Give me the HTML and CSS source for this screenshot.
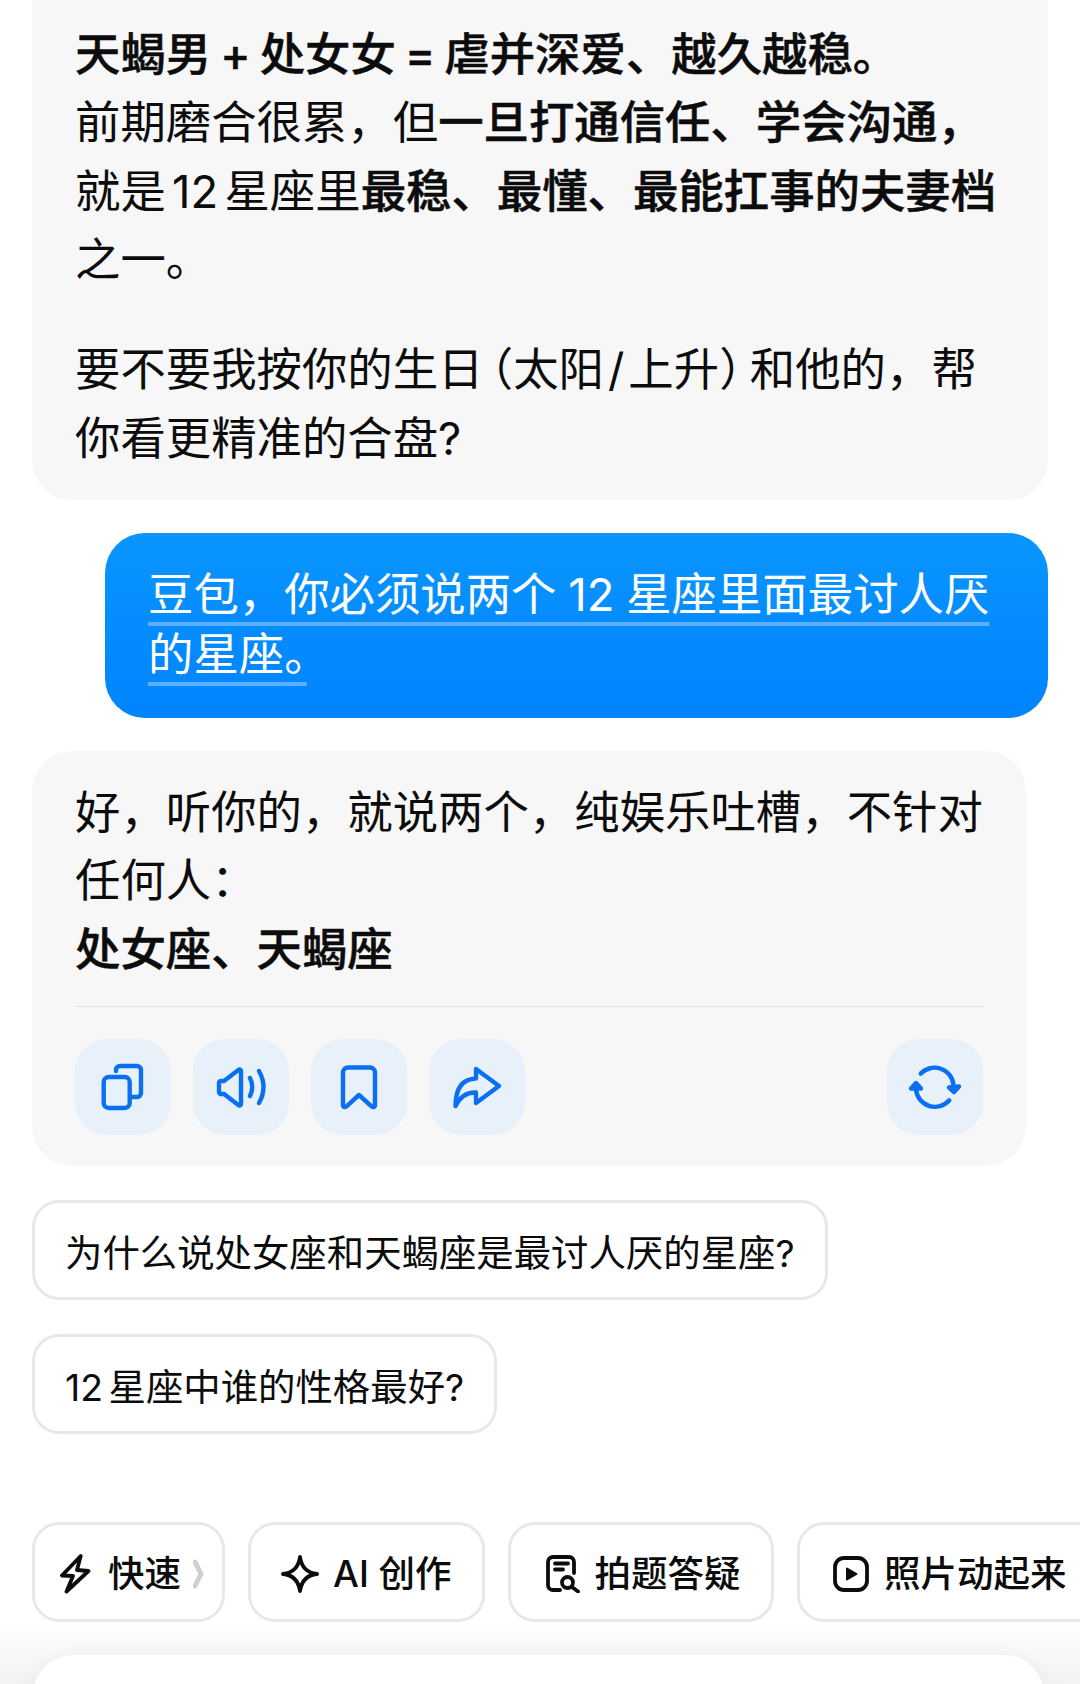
FILE: index.html
```html
<!DOCTYPE html>
<html lang="zh-CN">
<head>
<meta charset="utf-8">
<title>豆包</title>
<link rel="stylesheet" href="styles.css">
</head>
<body>
<main class="chat">
  <section class="bubble bubble-first">
    <p class="para"><strong class="tight-words">天蝎男 + 处女女 = 虐并深爱、越久越稳。</strong><br>前期磨合很累，但<strong>一旦打通信任、学会沟通，</strong><br><span class="tight">就是 12 星座里</span><strong>最稳、最懂、最能扛事的夫妻档</strong><br>之一。</p>
    <p class="para">要不要我按你的生日<span class="paren-open">（</span>太阳<span class="slash">/</span>上升<span class="paren-close">）</span>和他的，帮<br>你看更精准的合盘?</p>
  </section>

  <section class="user-bubble"><span class="user-text">豆包，你必须说两个 12 星座里面最讨人厌<br>的星座<span class="halt">。</span></span></section>

  <section class="bubble bubble-reply">
    <p class="para">好，听你的，就说两个，纯娱乐吐槽，不针对<br>任何人：<br><strong>处女座、天蝎座</strong></p>
    <div class="actions">
      <button class="action" aria-label="复制"><svg class="action-icon" viewBox="0 0 96 96"><rect x="28.7" y="38" width="26" height="31" rx="5"/><path d="M41 32v-1a4 4 0 0 1 4-4h17a4 4 0 0 1 4 4v23a4 4 0 0 1-4 4h-6"/></svg></button>
      <button class="action" aria-label="朗读"><svg class="action-icon" viewBox="0 0 96 96"><path d="M28 42h3l15-11.500a1.500 1.500 0 0 1 2 1.500v33a1.500 1.500 0 0 1-2 1.500L31 55h-3a2 2 0 0 1-2-2V44a2 2 0 0 1 2-2z"/><path d="M57 39q4.500 9 0 18"/><path d="M66 32q9 16 0 32"/></svg></button>
      <button class="action" aria-label="收藏"><svg class="action-icon" viewBox="0 0 96 96"><path d="M37 28.500h22a5 5 0 0 1 5 5V66a2 2 0 0 1-3.500 1.400L48 56 35.500 67.400A2 2 0 0 1 32 66V33.500a5 5 0 0 1 5-5z"/></svg></button>
      <button class="action" aria-label="分享"><svg class="action-icon" viewBox="0 0 96 96"><path d="M47 30 70 47 47 64V53.500C38 53 31 58 26.500 67 26.500 50 33 40 47 39.500z"/></svg></button>
      <button class="action action-end" aria-label="重新生成"><svg class="action-icon" viewBox="0 0 96 96"><path d="M33.700 34.700A19 19 0 0 1 66.500 46"/><path d="M62.300 61.300A19 19 0 0 1 29 50"/><path class="solid" d="M62 48.500 72 47.500 67 53z"/><path class="solid" d="M24 49.500 34 49.500 29 44z"/></svg></button>
    </div>
  </section>

  <a class="suggest">为什么说处女座和天蝎座是最讨人厌的星座?</a>
  <a class="suggest suggest-short">12 星座中谁的性格最好?</a>
</main>

<nav class="tools">
  <div class="tool tool-fast">
    <svg class="tool-icon icon-bolt" viewBox="0 0 36 40"><path d="M20.700 2 2 21.500 13 22 6.500 37.500 28.500 17 17 16z"/></svg>
    <span>快速</span>
    <svg class="tool-chev" viewBox="0 0 11 30"><path d="M2 3 8 15 2 27"/></svg>
  </div>
  <div class="tool tool-ai">
    <svg class="tool-icon icon-star" viewBox="0 0 38 40"><path d="M19 3C20.500 13 26 19 36 20 26 21 20.500 27 19 37 17.500 27 12 21 2 20 12 19 17.500 13 19 3z"/></svg>
    <span>AI 创作</span>
  </div>
  <div class="tool tool-ask">
    <svg class="tool-icon icon-ask" viewBox="0 0 34 38"><path d="M28 18V7a5 5 0 0 0-5-5H7a5 5 0 0 0-5 5v23a5 5 0 0 0 5 5h7"/><path d="M9 8.500h13M9 14.500h8"/><circle cx="21.500" cy="27.500" r="5.500"/><path d="M26 32l6 4.500"/></svg>
    <span>拍题答疑</span>
  </div>
  <div class="tool tool-photo">
    <svg class="tool-icon icon-play" viewBox="0 0 36 36"><rect x="2" y="2" width="32" height="32" rx="9"/><path class="solid" d="M14 12.500 23.500 18 14 23.500z"/></svg>
    <span>照片动起来</span>
  </div>
</nav>

<footer class="composer-area"><div class="composer"></div></footer>
</body>
</html>
```

FILE: styles.css
```css
* { box-sizing: border-box; }

html, body {
  margin: 0;
  height: 1684px;
  overflow: hidden;
  background: #fff;
}

body {
  font-family: Inter, "Noto Sans CJK SC", sans-serif;
  color: #0c0c0c;
  font-size: 45.4px;
  line-height: 68.4px;
}

.chat {
  display: flex;
  flex-direction: column;
  align-items: flex-start;
  gap: 33px;
  padding: 0 32px;
}

.para { margin: 0 0 41.600px; white-space: nowrap; }
.para:last-of-type { margin-bottom: 0; }

strong {
  font-weight: 500;
  -webkit-text-stroke: 0.5px #0c0c0c;
}

.tight { word-spacing: -6.500px; }
.tight-words { word-spacing: -3px; }

.paren-open { margin-left: 7px; font-feature-settings: "halt"; }
.paren-close { margin-right: 8px; font-feature-settings: "halt"; }
.slash { margin: 0 4px; }
.halt { font-feature-settings: "halt"; }

.bubble {
  background: #f7f7f7;
  padding: 28px 43px;
  border-radius: 40px;
}

.bubble-first {
  width: 1016px;
  height: 500px;
  padding-top: 21px;
  border-radius: 0 0 40px 40px;
}

.user-bubble {
  align-self: flex-end;
  width: 943px;
  height: 185px;
  padding: 31.500px 43px 0;
  line-height: 60px;
  color: #fff;
  white-space: nowrap;
  word-spacing: -1px;
  background: linear-gradient(#0a95ff, #0084ff);
  border-radius: 40px;
}

.user-text {
  text-decoration: underline 4px #5cb0ff;
  text-decoration-skip-ink: none;
  text-underline-offset: 11px;
}

.bubble-reply { width: 994px; }

.actions {
  display: flex;
  gap: 22px;
  margin-top: 22px;
  padding-top: 32px;
  padding-bottom: 3px;
  border-top: 1px solid #e2e2e2;
}

.action {
  width: 96px;
  height: 96px;
  padding: 0;
  border: 0;
  border-radius: 32px;
  background: #e8f1fa;
}

.action-end { margin-left: auto; }

.action-icon {
  display: block;
  width: 96px;
  height: 96px;
  fill: none;
  stroke: #0b6ff2;
  stroke-width: 4.400;
  stroke-linecap: round;
  stroke-linejoin: round;
}

.action-icon .solid { fill: #0b6ff2; }

.suggest {
  display: block;
  height: 100px;
  padding: 4px 30px 0;
  border: 3px solid #e8e8e8;
  border-radius: 27px;
  font-size: 37.400px;
  line-height: 94px;
  background: #fff;
  margin-top: 1px;
}

.suggest-short { word-spacing: -5px; }

.tools {
  display: flex;
  gap: 23px;
  margin-top: 88px;
  padding-left: 32px;
  width: 1200px;
}

.tool {
  display: flex;
  flex: none;
  align-items: center;
  height: 100px;
  padding-top: 4px;
  border: 3px solid #e8e8e8;
  border-radius: 27px;
  font-size: 36.500px;
  font-weight: 500;
  line-height: 50px;
  background: #fff;
}

.tool-icon {
  flex: none;
  fill: none;
  stroke: #0c0c0c;
  stroke-width: 3.800;
  stroke-linecap: round;
  stroke-linejoin: round;
}

.tool-icon .solid { fill: #0c0c0c; stroke-width: 2; }

.icon-bolt { width: 36px; height: 40px; margin-right: 12px; }
.icon-star { width: 38px; height: 40px; margin-right: 14px; }
.icon-ask { width: 34px; height: 38px; margin-right: 15px; }
.icon-play { width: 36px; height: 36px; margin-right: 15px; }

.tool-fast { width: 193px; padding-left: 25px; }
.tool-ai { width: 237px; padding-left: 30px; }
.tool-ask { width: 266px; padding-left: 34.500px; }
.tool-photo { width: 320px; padding-left: 33px; }

.tool-chev {
  flex: none;
  width: 11px;
  height: 30px;
  margin-left: 12px;
  fill: none;
  stroke: #cfcfcf;
  stroke-width: 5;
  stroke-linecap: round;
  stroke-linejoin: round;
}

.composer-area {
  padding: 33px 36px 0 33px;
  background: linear-gradient(#fff, #f3f3f3);
  height: 62px;
}

.composer {
  height: 60px;
  background: #fff;
  border-radius: 40px 40px 0 0;
  box-shadow: 0 0 24px rgba(0, 0, 0, 0.05);
}
```
